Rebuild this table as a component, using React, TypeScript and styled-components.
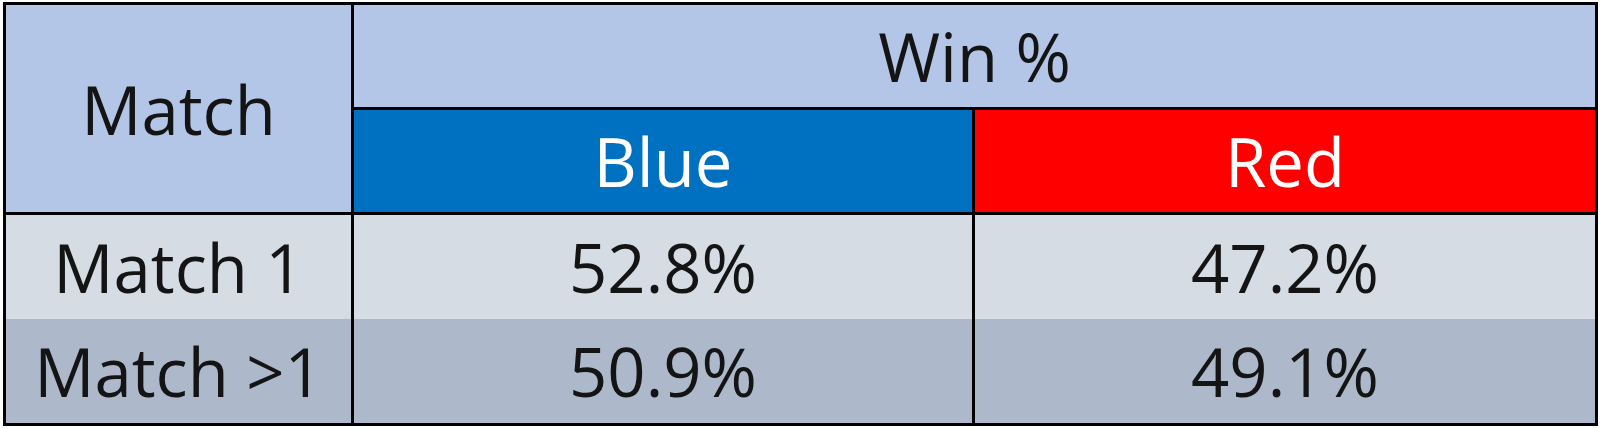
import styled, { createGlobalStyle } from 'styled-components';

const GlobalStyle = createGlobalStyle`
  html, body {
    margin: 0;
    padding: 0;
    background: #ffffff;
  }
`;

const Page = styled.div`
  padding: 2px 0 0 3px;
`;

const Table = styled.table`
  border-collapse: collapse;
  width: 1592px;
  table-layout: fixed;
  font-family: "Open Sans", "Noto Sans", sans-serif;
  font-size: 67px;
  color: #141414;
  border: 3px solid #000;
`;

const HeadCell = styled.th<{ $bg?: string; $light?: boolean }>`
  background: ${(p) => p.$bg || '#b4c6e7'};
  color: ${(p) => (p.$light ? '#ffffff' : '#141414')};
  border: 3px solid #000;
  font-weight: 400;
  height: 102px;
  padding: 0;
  text-align: center;
  vertical-align: middle;
`;

const Cell = styled.td<{ $bg: string }>`
  background: ${(p) => p.$bg};
  border-left: 3px solid #000;
  border-right: 3px solid #000;
  height: 104px;
  padding: 0;
  text-align: center;
  vertical-align: middle;
`;

const rows = [
  { label: 'Match 1', blue: '52.8%', red: '47.2%', bg: '#d6dce4' },
  { label: 'Match >1', blue: '50.9%', red: '49.1%', bg: '#adb9ca' },
];

export default function App() {
  return (
    <>
      <GlobalStyle />
      <Page>
        <Table>
          <colgroup>
            <col style={{ width: 348 }} />
            <col style={{ width: 621 }} />
            <col style={{ width: 623 }} />
          </colgroup>
          <thead>
            <tr>
              <HeadCell rowSpan={2}>Match</HeadCell>
              <HeadCell colSpan={2}>Win %</HeadCell>
            </tr>
            <tr>
              <HeadCell $bg="#0070c0" $light>
                Blue
              </HeadCell>
              <HeadCell $bg="#ff0000" $light>
                Red
              </HeadCell>
            </tr>
          </thead>
          <tbody>
            {rows.map((r) => (
              <tr key={r.label}>
                <Cell $bg={r.bg}>{r.label}</Cell>
                <Cell $bg={r.bg}>{r.blue}</Cell>
                <Cell $bg={r.bg}>{r.red}</Cell>
              </tr>
            ))}
          </tbody>
        </Table>
      </Page>
    </>
  );
}
